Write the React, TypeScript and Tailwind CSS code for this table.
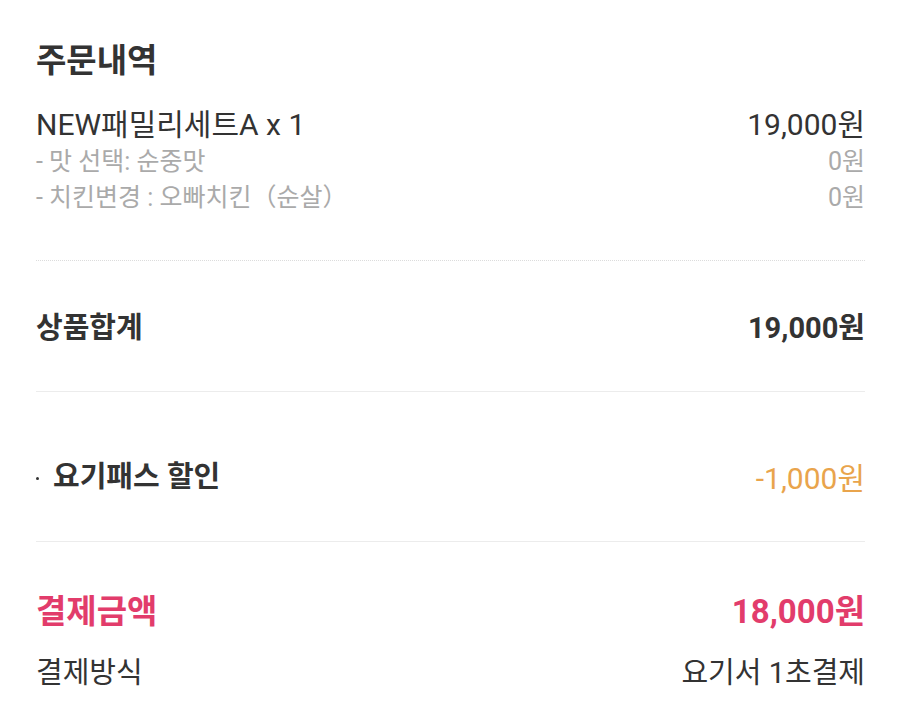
const font = { fontFamily: 'Roboto, "Noto Sans CJK KR", "Noto Sans", sans-serif' };

const App = () => {
  return (
    <div style={font} className="w-[900px] h-[714px] bg-white pl-[36px] pr-[35px] pt-[43px] text-[#333]">
      <h1 className="h-[36px] leading-[36px] text-[33px] font-bold text-[#333]">주문내역</h1>

      <div className="mt-[26px] flex h-[38px] items-center justify-between text-[30px] text-[#333]">
        <span>NEW패밀리세트A x 1</span>
        <span>19,000원</span>
      </div>
      <div className="flex h-[37px] items-end justify-between text-[25px] text-[#aaa]">
        <span>- 맛 선택: 순중맛</span>
        <span>0원</span>
      </div>
      <div className="flex h-[36px] items-end justify-between text-[25px] text-[#aaa]">
        <span>- 치킨변경 : 오빠치킨（순살）</span>
        <span>0원</span>
      </div>

      <div className="mt-[44px] border-t border-dotted border-[#dcdcdc]" />

      <div className="mt-[48px] flex h-[40px] items-center justify-between text-[29px] font-bold text-[#333]">
        <span>상품합계</span>
        <span>19,000원</span>
      </div>

      <div className="mt-[42px] border-t border-[#ececec]" />

      <div className="mt-[66px] flex h-[40px] items-center justify-between">
        <div className="flex items-center gap-[14px]">
          <div className="h-[3px] w-[3px] rounded-full bg-[#333]" />
          <span className="text-[29px] font-bold text-[#333]">요기패스 할인</span>
        </div>
        <span className="text-[30px] text-[#e9a44c]">-1,000원</span>
      </div>

      <div className="mt-[43px] border-t border-[#ececec]" />

      <div className="mt-[50px] flex h-[40px] items-center justify-between text-[33px] font-bold text-[#e23c6b]">
        <span>결제금액</span>
        <span>18,000원</span>
      </div>
      <div className="mt-[22px] flex h-[40px] items-center justify-between text-[29px] text-[#333]">
        <span>결제방식</span>
        <span>요기서 1초결제</span>
      </div>
    </div>
  );
};

export default App;
